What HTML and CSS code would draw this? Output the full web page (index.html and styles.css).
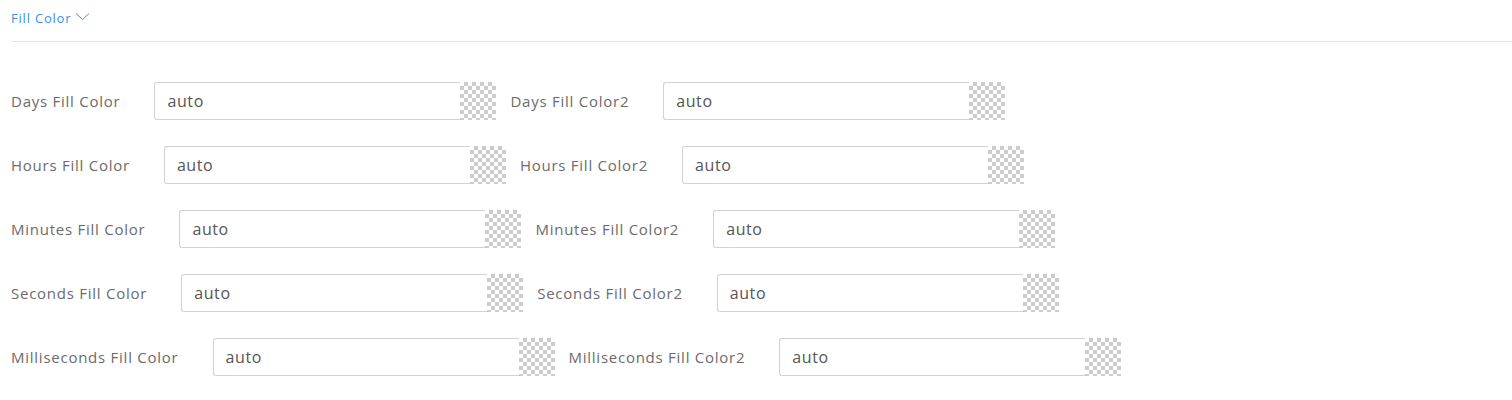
FILE: index.html
```html
<!doctype html>
<html>

<head>
    <title>Fill Color</title>
    <link rel="stylesheet" href="styles.css">
</head>

<body>
    <div class="panel">
        <div class="panelHeader">
            <span class="panelTitle">Fill Color</span>
            <svg class="chevron" width="15" height="9" viewBox="0 0 15 9">
                <path d="M1 1.5 L7.5 7.5 L14 1.5" fill="none" stroke="#3d8ef0" stroke-width="1"/>
            </svg>
        </div>

        <div class="fields">
            <div class="fieldRow">
                <label class="fieldLabel">Days Fill Color</label>
                <div class="colorInput"><input type="text" value="auto"><span class="swatch"></span></div>
                <label class="fieldLabel">Days Fill Color2</label>
                <div class="colorInput"><input type="text" value="auto"><span class="swatch"></span></div>
            </div>
            <div class="fieldRow">
                <label class="fieldLabel">Hours Fill Color</label>
                <div class="colorInput"><input type="text" value="auto"><span class="swatch"></span></div>
                <label class="fieldLabel">Hours Fill Color2</label>
                <div class="colorInput"><input type="text" value="auto"><span class="swatch"></span></div>
            </div>
            <div class="fieldRow">
                <label class="fieldLabel">Minutes Fill Color</label>
                <div class="colorInput"><input type="text" value="auto"><span class="swatch"></span></div>
                <label class="fieldLabel">Minutes Fill Color2</label>
                <div class="colorInput"><input type="text" value="auto"><span class="swatch"></span></div>
            </div>
            <div class="fieldRow">
                <label class="fieldLabel">Seconds Fill Color</label>
                <div class="colorInput"><input type="text" value="auto"><span class="swatch"></span></div>
                <label class="fieldLabel">Seconds Fill Color2</label>
                <div class="colorInput"><input type="text" value="auto"><span class="swatch"></span></div>
            </div>
            <div class="fieldRow">
                <label class="fieldLabel">Milliseconds Fill Color</label>
                <div class="colorInput"><input type="text" value="auto"><span class="swatch"></span></div>
                <label class="fieldLabel">Milliseconds Fill Color2</label>
                <div class="colorInput"><input type="text" value="auto"><span class="swatch"></span></div>
            </div>
        </div>
    </div>
</body>

</html>
```

FILE: styles.css
```css
* {
    margin: 0;
    padding: 0;
    box-sizing: border-box;
}

body {
    font-family: "Open Sans", Arial, sans-serif;
    background-color: white;
    color: #6b6b6b;
}

.panel {
    padding-left: 11px;
}

.panelHeader {
    height: 42px;
    border-bottom: solid 1px #e5e5e5;
    display: flex;
    align-items: center;
    padding-bottom: 6px;
}

.panelTitle {
    font-size: 13px;
    letter-spacing: 0.8px;
    color: #3d8ef0;
}

.chevron {
    margin-left: 4px;
    margin-top: -2px;
}

.fields {
    padding-top: 40px;
    display: flex;
    flex-direction: column;
    gap: 26px;
}

.fieldRow {
    display: flex;
    align-items: center;
    height: 38px;
}

.fieldLabel {
    font-size: 15px;
    letter-spacing: 0.75px;
    margin-right: 34px;
}

.colorInput {
    display: flex;
    width: 342px;
    height: 38px;
    margin-right: 14px;
}

.colorInput input {
    width: 306px;
    height: 38px;
    border: solid 1px #cfd3d8;
    border-right: none;
    border-radius: 3px 0 0 3px;
    padding-left: 12px;
    font: 16px "Open Sans", Arial, sans-serif;
    letter-spacing: 0.6px;
    color: #555;
    outline: 0;
}

.swatch {
    width: 36px;
    height: 38px;
    background-color: #fff;
    background-image:
        linear-gradient(45deg, #ccc 25%, transparent 25%, transparent 75%, #ccc 75%),
        linear-gradient(45deg, #ccc 25%, transparent 25%, transparent 75%, #ccc 75%);
    background-size: 8px 8px;
    background-position: 0 0, 4px 4px;
}
```
